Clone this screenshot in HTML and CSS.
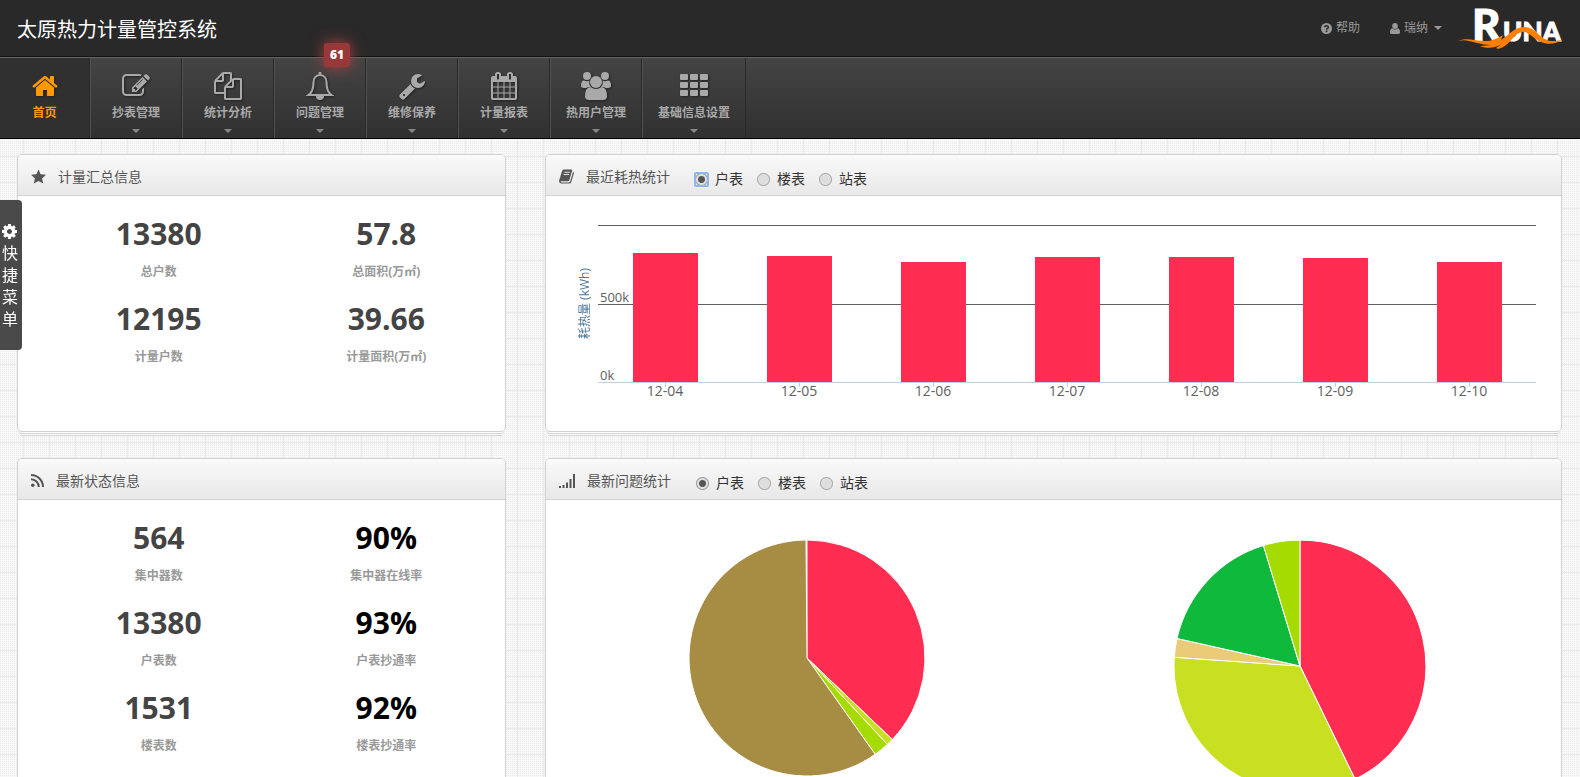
FILE: index.html
```html
<!DOCTYPE html>
<html lang="zh-CN">
<head>
<meta charset="utf-8">
<title>太原热力计量管控系统</title>
<link rel="stylesheet" href="styles.css">
</head>
<body>
<header class="topbar">
  <h1 class="brand">太原热力计量管控系统</h1>
  <div class="topbar-right">
    <a class="top-link" href="#">
      <svg width="11" height="11" viewBox="0 0 12 12"><circle cx="6" cy="6" r="6" fill="#999"/><path d="M4 4.6C4 2.4 8 2.4 8 4.5 8 5.8 6.1 5.8 6.1 7.3" fill="none" stroke="#292929" stroke-width="1.6"/><rect x="5.2" y="8.2" width="1.7" height="1.7" fill="#292929"/></svg>
      <span>帮助</span>
    </a>
    <a class="top-link top-user" href="#">
      <svg width="10" height="11" viewBox="0 0 10 11" fill="#999"><ellipse cx="5" cy="3" rx="2.8" ry="3"/><path d="M2.2 5.2Q5 7.6 7.8 5.2 10 5.8 10 9.4 10 11 8.4 11H1.6Q0 11 0 9.4 0 5.8 2.2 5.2z"/></svg>
      <span>瑞纳</span>
      <i class="caret"></i>
    </a>
    <svg class="logo" width="105" height="44" viewBox="0 0 105 44" role="img" aria-label="RUNA">
      <text x="14" y="35" class="logo-text" font-size="44">R</text>
      <text x="45" y="35" class="logo-text" font-size="26">UNA</text>
      <path d="M0 35C8 31 17 35 28 35 33 35 39 33 45 29L43 34C50 30 56 21 66 21 78 21 82 34 93 35 98 35.500 101 34 104 34 98 38 90 39 83 36 75 33 72 26 65 26 57 26 53 37 45 41 42 43 39 43 38 42L44 38C38 42 28 43 22 40L34 39C28 39 24 38 19 37 12 35 6 33 0 35z" fill="#ff7f00"/>
    </svg>
  </div>
</header>

<nav class="nav">
  <a class="nav-item is-active" href="#">
    <svg class="nav-icon" viewBox="0 0 1792 1792"><path d="M1472 992v480q0 26-19 45t-45 19h-384v-384h-256v384h-384q-26 0-45-19t-19-45v-480q0-1 .5-3t.5-3l575-474 575 474q1 2 1 6zm223-69l-62 74q-8 9-21 11h-3q-13 0-21-7l-692-577-692 577q-12 8-24 7-13-2-21-11l-62-74q-8-10-7-23.500t11-21.500l719-599q32-26 76-26t76 26l244 204v-195q0-14 9-23t23-9h192q14 0 23 9t9 23v408l219 182q10 8 11 21.500t-7 23.500z"/></svg>
    <span>首页</span>
  </a>
  <a class="nav-item" href="#">
    <svg class="nav-icon" viewBox="0 0 1792 1792"><path d="M888 1184l116-116-152-152-116 116v56h96v96h56zm440-720q-16-16-33 1l-350 350q-17 17-1 33t33-1l350-350q17-17 1-33zm80 594v190q0 119-84.500 203.500t-203.500 84.500h-832q-119 0-203.500-84.500t-84.500-203.500v-832q0-119 84.500-203.500t203.500-84.500h832q63 0 117 25 15 7 18 23 3 17-9 29l-49 49q-14 14-32 8-23-6-45-6h-832q-66 0-113 47t-47 113v832q0 66 47 113t113 47h832q66 0 113-47t47-113v-126q0-13 9-22l64-64q15-15 35-7t20 29zm-96-738l288 288-672 672h-288v-288zm444 132l-92 92-288-288 92-92q28-28 68-28t68 28l152 152q28 28 28 68t-28 68z"/></svg>
    <span>抄表管理</span><i class="caret"></i>
  </a>
  <a class="nav-item" href="#">
    <svg class="nav-icon" viewBox="0 0 1792 1792"><path d="M1696 384q40 0 68 28t28 68v1216q0 40-28 68t-68 28h-960q-40 0-68-28t-28-68v-288h-544q-40 0-68-28t-28-68v-672q0-40 20-88t48-76l408-408q28-28 76-48t88-20h416q40 0 68 28t28 68v328q68-40 128-40h416zm-544 213l-299 299h299v-299zm-640-384l-299 299h299v-299zm196 647l316-316v-416h-384v416q0 40-28 68t-68 28h-416v640h512v-256q0-40 20-88t48-76zm956 804v-1152h-384v416q0 40-28 68t-68 28h-416v640h896z"/></svg>
    <span>统计分析</span><i class="caret"></i>
  </a>
  <a class="nav-item" href="#">
    <svg class="nav-icon" viewBox="0 0 28 28"><path d="M14 3C9.500 3 7.500 6.500 7.500 10.500 7.500 17 6 20.500 2.500 23H25.500C22 20.500 20.500 17 20.500 10.500 20.500 6.500 18.500 3 14 3z" fill="none" stroke="currentColor" stroke-width="2"/><path d="M12.600 0h2.800v3h-2.800zM10 24h8a4 4 0 0 1-8 0z"/></svg>
    <span>问题管理</span><i class="caret"></i>
    <b class="badge">61</b>
  </a>
  <a class="nav-item" href="#">
    <svg class="nav-icon" viewBox="0 0 1792 1792"><path d="M448 1472q0-26-19-45t-45-19-45 19-19 45 19 45 45 19 45-19 19-45zm644-420l-682 682q-37 37-90 37-52 0-91-37l-106-108q-38-36-38-90 0-53 38-91l681-681q39 98 114.500 173.500t173.500 114.500zm634-435q0 39-23 106-47 134-164.500 217.500t-258.500 83.500q-185 0-316.500-131.500t-131.500-316.500 131.500-316.500 316.500-131.500q58 0 121.500 16.500t107.500 46.500q16 11 16 28t-16 28l-293 169v224l193 107q5-3 79-48.500t135.500-81 70.500-35.500q15 0 23.500 10t8.500 25z"/></svg>
    <span>维修保养</span><i class="caret"></i>
  </a>
  <a class="nav-item" href="#">
    <svg class="nav-icon" viewBox="0 0 1792 1792"><path d="M192 1664h288v-288h-288v288zm352 0h320v-288h-320v288zm-352-352h288v-320h-288v320zm352 0h320v-320h-320v320zm-352-384h288v-288h-288v288zm736 736h320v-288h-320v288zm-384-736h320v-288h-320v288zm768 736h288v-288h-288v288zm-384-352h320v-320h-320v320zm-352-864v-288q0-13-9.500-22.500t-22.500-9.500h-64q-13 0-22.500 9.500t-9.500 22.500v288q0 13 9.500 22.500t22.500 9.500h64q13 0 22.500-9.500t9.500-22.500zm736 864h288v-320h-288v320zm-384-384h320v-288h-320v288zm384 0h288v-288h-288v288zm32-480v-288q0-13-9.500-22.500t-22.500-9.500h-64q-13 0-22.500 9.500t-9.500 22.500v288q0 13 9.500 22.500t22.500 9.500h64q13 0 22.500-9.500t9.500-22.500zm384-64v1280q0 52-38 90t-90 38h-1408q-52 0-90-38t-38-90v-1280q0-52 38-90t90-38h128v-96q0-66 47-113t113-47h64q66 0 113 47t47 113v96h384v-96q0-66 47-113t113-47h64q66 0 113 47t47 113v96h128q52 0 90 38t38 90z"/></svg>
    <span>计量报表</span><i class="caret"></i>
  </a>
  <a class="nav-item" href="#">
    <svg class="nav-icon nav-icon-wide" viewBox="0 0 30 28"><circle cx="6" cy="4" r="4"/><circle cx="24" cy="4" r="4"/><path d="M3 8.500Q6 10 8.500 8.500A7 7 0 0 0 10 15H8Q6.500 15 5.500 16H3Q0 16 0 13.500 0 8.500 3 8.500zM27 8.500Q24 10 21.500 8.500A7 7 0 0 1 20 15H22Q23.500 15 24.500 16H27Q30 16 30 13.500 30 8.500 27 8.500z"/><circle cx="15" cy="10" r="6"/><path d="M9.500 15Q15 19 20.500 15 26 15.500 26 24 26 28 22 28H8Q4 28 4 24 4 15.500 9.500 15z"/></svg>
    <span>热用户管理</span><i class="caret"></i>
  </a>
  <a class="nav-item" href="#">
    <svg class="nav-icon" viewBox="0 0 28 28"><path d="M1 2h6q1 0 1 1v4q0 1-1 1H1Q0 8 0 7V3q0-1 1-1zm10 0h6q1 0 1 1v4q0 1-1 1h-6q-1 0-1-1V3q0-1 1-1zm10 0h6q1 0 1 1v4q0 1-1 1h-6q-1 0-1-1V3q0-1 1-1zM1 10h6q1 0 1 1v4q0 1-1 1H1q-1 0-1-1v-4q0-1 1-1zm10 0h6q1 0 1 1v4q0 1-1 1h-6q-1 0-1-1v-4q0-1 1-1zm10 0h6q1 0 1 1v4q0 1-1 1h-6q-1 0-1-1v-4q0-1 1-1zM1 18h6q1 0 1 1v4q0 1-1 1H1q-1 0-1-1v-4q0-1 1-1zm10 0h6q1 0 1 1v4q0 1-1 1h-6q-1 0-1-1v-4q0-1 1-1zm10 0h6q1 0 1 1v4q0 1-1 1h-6q-1 0-1-1v-4q0-1 1-1z"/></svg>
    <span>基础信息设置</span><i class="caret"></i>
  </a>
</nav>

<button class="quick-menu" type="button">
  <svg width="15" height="15" viewBox="128 128 1536 1536" fill="#fff"><path d="M1152 896q0-106-75-181t-181-75-181 75-75 181 75 181 181 75 181-75 75-181zm512-109v222q0 12-8 23t-20 13l-185 28q-19 54-39 91 35 50 107 138 10 12 10 25t-9 23q-27 37-99 108t-94 71q-12 0-26-9l-138-108q-44 23-91 38-16 136-29 186-7 28-36 28h-222q-14 0-24.500-8.500t-11.500-21.500l-28-184q-49-16-90-37l-141 107q-10 9-25 9-14 0-25-11-126-114-165-168-7-10-7-23 0-12 8-23 15-21 51-66.500t54-70.500q-27-50-41-99l-183-27q-13-2-21-12.500t-8-23.500v-222q0-12 8-23t19-13l186-28q14-46 39-92-40-57-107-138-10-12-10-24 0-10 9-23 26-36 98.500-107.500t94.500-71.500q13 0 26 10l138 107q44-23 91-38 16-136 29-186 7-28 36-28h222q14 0 24.500 8.500t11.500 21.500l28 184q49 16 90 37l142-107q9-9 24-9 13 0 25 10 129 119 165 170 7 8 7 22 0 12-8 23-15 21-51 66.500t-54 70.500q26 50 41 98l183 28q13 2 21 12.500t8 23.500z"/></svg>
  <span>快捷菜单</span>
</button>

<main class="board">
  <section class="card">
    <div class="card-head">
      <svg width="15" height="15" viewBox="0 0 16 15" fill="#555"><path d="M8 0l2.300 5 5.700.7-4.200 3.800L13 15 8 12.200 3 15l1.200-5.500L0 5.700 5.700 5z"/></svg>
      <h2 class="card-title">计量汇总信息</h2>
    </div>
    <div class="stats">
      <div class="stat"><strong>13380</strong><span>总户数</span></div>
      <div class="stat"><strong>57.8</strong><span>总面积(万㎡)</span></div>
      <div class="stat"><strong>12195</strong><span>计量户数</span></div>
      <div class="stat"><strong>39.66</strong><span>计量面积(万㎡)</span></div>
    </div>
  </section>

  <section class="card">
    <div class="card-head">
      <svg width="15" height="15" viewBox="0 0 16 15"><path d="M5 0H13.200Q14.400 0 14 1.300L11 11.500Q10.700 12.500 9.500 12.500H2Q1.200 13.600 2.500 13.800H10.300Q11.600 13.800 12 12.600L15 2.500Q16.200 3.200 15.800 4.400L13 13.600Q12.500 15 11 15H2.300Q-.5 14.500.2 11.500L3.200 1.800Q3.700 0 5 0z" fill="#555"/><path d="M5.600 3h6M4.900 5.400h6" stroke="#eee" stroke-width="1"/></svg>
      <h2 class="card-title">最近耗热统计</h2>
      <div class="radios">
        <label><input class="radio is-focused" type="radio" name="heat" checked>户表</label>
        <label><input class="radio" type="radio" name="heat">楼表</label>
        <label><input class="radio" type="radio" name="heat">站表</label>
      </div>
    </div>
    <div class="chart">
      <div class="axis-title">耗热量 (kWh)</div>
      <div class="chart-main">
        <div class="plot">
          <div class="slot"><div class="bar" style="height:129px"></div></div>
          <div class="slot"><div class="bar" style="height:126px"></div></div>
          <div class="slot"><div class="bar" style="height:120px"></div></div>
          <div class="slot"><div class="bar" style="height:125px"></div></div>
          <div class="slot"><div class="bar" style="height:125px"></div></div>
          <div class="slot"><div class="bar" style="height:124px"></div></div>
          <div class="slot"><div class="bar" style="height:120px"></div></div>
          <span class="tick tick-mid">500k</span>
          <span class="tick tick-zero">0k</span>
        </div>
        <div class="dates">
          <span>12-04</span><span>12-05</span><span>12-06</span><span>12-07</span><span>12-08</span><span>12-09</span><span>12-10</span>
        </div>
      </div>
    </div>
  </section>

  <section class="card">
    <div class="card-head">
      <svg width="13" height="13" viewBox="0 0 13 13" fill="none" stroke="#555" stroke-width="2"><circle cx="1.800" cy="11.200" r="1.800" fill="#555" stroke="none"/><path d="M0 5.200A7.800 7.800 0 0 1 7.800 13M0 1A12 12 0 0 1 12 13"/></svg>
      <h2 class="card-title">最新状态信息</h2>
    </div>
    <div class="stats">
      <div class="stat"><strong>564</strong><span>集中器数</span></div>
      <div class="stat is-rate"><strong>90%</strong><span>集中器在线率</span></div>
      <div class="stat"><strong>13380</strong><span>户表数</span></div>
      <div class="stat is-rate"><strong>93%</strong><span>户表抄通率</span></div>
      <div class="stat"><strong>1531</strong><span>楼表数</span></div>
      <div class="stat is-rate"><strong>92%</strong><span>楼表抄通率</span></div>
    </div>
  </section>

  <section class="card">
    <div class="card-head">
      <svg width="16" height="14" viewBox="0 0 16 14" fill="#555"><path d="M0 12h2v2H0zM3.500 11h2v3h-2zM7 8.500h2V14H7zM10.500 5h2v9h-2zM14 0h2v14h-2z"/></svg>
      <h2 class="card-title">最新问题统计</h2>
      <div class="radios">
        <label><input class="radio" type="radio" name="issue" checked>户表</label>
        <label><input class="radio" type="radio" name="issue">楼表</label>
        <label><input class="radio" type="radio" name="issue">站表</label>
      </div>
    </div>
    <div class="pies">
      <svg width="240" height="240" viewBox="0 0 240 240" stroke="#fff" stroke-width="1" stroke-linejoin="round">
        <path fill="#ff2d51" d="M120 120V2A118 118 0 0 1 205.300 201.500z"/>
        <path fill="#c8df22" d="M120 120L205.300 201.500A118 118 0 0 1 200.300 206.400z"/>
        <path fill="#a5db00" d="M120 120L200.300 206.400A118 118 0 0 1 188.200 216.300z"/>
        <path fill="#a78c44" d="M120 120L188.200 216.300A118 118 0 1 1 119 2z"/>
      </svg>
      <svg width="254" height="258" viewBox="0 -1 252 256" stroke="#fff" stroke-width="1" stroke-linejoin="round">
        <path fill="#ff2d51" d="M126 126V1A125 125 0 0 1 180.600 238.400z"/>
        <path fill="#c8df22" d="M126 126L180.600 238.400A125 125 0 0 1 1.300 117.300z"/>
        <path fill="#eacb78" d="M126 126L1.300 117.300A125 125 0 0 1 4 98.700z"/>
        <path fill="#0eb93b" d="M126 126L4 98.700A125 125 0 0 1 89.700 6.400z"/>
        <path fill="#a5db00" d="M126 126L89.700 6.400A125 125 0 0 1 126 1z"/>
      </svg>
    </div>
  </section>
</main>
</body>
</html>
```
FILE: styles.css
```css
* { box-sizing: border-box; }

body {
  margin: 0;
  color: #333;
  font: 14px/20px "Open Sans", "Noto Sans CJK SC", sans-serif;
  background:
    linear-gradient(#ebebeb 1px, transparent 1px) 0 0 / 26px 26px,
    linear-gradient(90deg, #ebebeb 1px, transparent 1px) 23px 0 / 26px 26px,
    linear-gradient(#f8f8f8 1px, transparent 1px) 0 0 / 2px 2px,
    linear-gradient(90deg, #f8f8f8 1px, transparent 1px) 1px 0 / 2px 2px,
    #ebebeb;
}

a { color: inherit; text-decoration: none; }
svg { display: block; flex: none; }

.caret {
  border: 4px solid transparent;
  border-top-color: currentColor;
  border-bottom: 0;
}

/* Top bar */
.topbar {
  display: flex;
  align-items: center;
  justify-content: space-between;
  height: 57px;
  padding: 0 17px;
  background: #292929;
  border-bottom: 1px solid #111;
}
.brand {
  margin: 0;
  padding-top: 4px;
  color: #fff;
  font-size: 20px;
  line-height: 28px;
  font-weight: 400;
}
.topbar-right { display: flex; align-items: center; }
.top-link {
  display: flex;
  align-items: center;
  gap: 4px;
  color: #999;
  font-size: 12px;
}
.top-user { margin: 0 16px 0 30px; }
.top-user .caret { margin-left: 2px; }
.logo-text {
  font-family: Lato, sans-serif;
  font-weight: 900;
  fill: #fff;
  stroke: #fff;
  stroke-width: 1px;
}
.logo { overflow: visible; }

/* Main navigation */
.nav {
  display: flex;
  height: 82px;
  color: #a9a9a9;
  background: linear-gradient(#444, #303030);
  border-top: 1px solid #666;
  border-bottom: 1px solid #000;
}
.nav-item {
  position: relative;
  display: flex;
  flex-direction: column;
  align-items: center;
  min-width: 92px;
  padding: 14px 15px 0;
  border-right: 1px solid #2a2a2a;
  border-left: 1px solid #505050;
  font-size: 12px;
  line-height: 18px;
  font-weight: 700;
}
.nav-item .caret { margin-top: 7px; color: #888; }
.nav-item.is-active {
  min-width: 90px;
  color: #f90;
  background: #303030;
  border-left: 0;
}
.nav-icon {
  width: 28px;
  height: 28px;
  margin-bottom: 4px;
  fill: currentColor;
  filter: drop-shadow(1px 1px 1px #222);
}
.nav-icon-wide { width: 30px; }
.badge {
  position: absolute;
  top: -15px;
  right: 15px;
  padding: 2px 6px;
  color: #fff;
  font-size: 12px;
  line-height: 20px;
  background: #993838;
  border-radius: 3px;
  box-shadow: 0 0 15px #b04040;
}

/* Side tab pinned to the window edge */
.quick-menu {
  position: fixed;
  z-index: 2;
  top: 200px;
  left: 0;
  width: 22px;
  padding: 24px 2px 21px;
  color: #fff;
  font: 16px/22px "Noto Sans CJK SC", sans-serif;
  background: rgba(60, 60, 60, .93);
  border: 0;
  border-radius: 0 4px 4px 0;
}
.quick-menu span { display: block; width: 16px; margin-top: 2px; }

/* Cards */
.board {
  display: grid;
  grid-template-columns: 489fr 1017fr;
  gap: 26px 39px;
  padding: 15px 18px 26px 17px;
}
.card {
  position: relative;
  min-height: 278px;
  background: #fff;
  border: 1px solid #d2d2d2;
  border-radius: 5px;
  box-shadow: 0 3px 0 -2px #fff, 0 4px 0 -2px #d2d2d2, 0 7px 0 -4px #fff, 0 8px 0 -4px #d2d2d2;
}
.card-head {
  display: flex;
  align-items: center;
  gap: 12px;
  height: 41px;
  padding: 3px 13px 0;
  background: linear-gradient(#fafafa, #e8e8e8);
  border-bottom: 1px solid #d2d2d2;
  border-radius: 4px 4px 0 0;
}
.card-title {
  margin: 0;
  color: #555;
  font-size: 14px;
  font-weight: 400;
}
.radios { display: flex; gap: 13px; padding: 5px 0 0 12px; }
.radios label { display: flex; align-items: center; gap: 6px; }
.radio {
  width: 15px;
  height: 15px;
  margin: 0;
  appearance: none;
  border-radius: 2px;
  background: radial-gradient(circle, #dedede 5px, #aaa 6px, transparent 7px);
}
.radio:checked {
  background: radial-gradient(circle, #555 2px, #555 3px, #dedede 4px, #dedede 5px, #999 6px, transparent 7px);
}
.radio.is-focused { box-shadow: inset 0 0 0 2px #8fb5f0; }

/* Figures */
.stats {
  display: grid;
  grid-template-columns: 1fr 1fr;
  gap: 17px 0;
  padding: 18px 5px 18px 27px;
}
.stat { text-align: center; }
.stat strong {
  display: block;
  margin-bottom: 8px;
  color: #444;
  font-size: 30px;
  line-height: 40px;
}
.stat span {
  display: block;
  color: #999;
  font-size: 12px;
  font-weight: 700;
}
.stat.is-rate strong { color: #000; }

/* Bar chart */
.chart {
  display: flex;
  gap: 4px;
  padding: 29px 25px 0 30px;
}
.axis-title {
  height: 158px;
  color: #4d759e;
  font-size: 12px;
  line-height: 18px;
  text-align: center;
  writing-mode: vertical-rl;
  text-orientation: sideways;
  transform: rotate(180deg);
}
.chart-main { flex: 1; }
.plot {
  position: relative;
  display: flex;
  height: 158px;
  background: linear-gradient(#606060, #606060) 0 0 / 100% 1px no-repeat,
    linear-gradient(#606060, #606060) 0 79px / 100% 1px no-repeat;
  border-bottom: 1px solid #c0d0e0;
}
.slot { display: flex; flex: 1; align-items: flex-end; justify-content: center; }
.bar { width: 65px; background: #ff2d51; }
.tick { position: absolute; left: 2px; color: #606060; font-size: 13px; line-height: 14px; }
.tick-mid { top: 65px; }
.tick-zero { bottom: 0; }
.dates { display: flex; color: #606060; line-height: 16px; }
.dates span {
  flex: 1;
  text-align: center;
  background: linear-gradient(#c0d0e0, #c0d0e0) 50% 0 / 1px 4px no-repeat;
}

/* Pie charts */
.pies {
  display: grid;
  grid-template-columns: 1fr 1fr;
  justify-items: center;
  padding: 38px 14px 20px;
}
```
